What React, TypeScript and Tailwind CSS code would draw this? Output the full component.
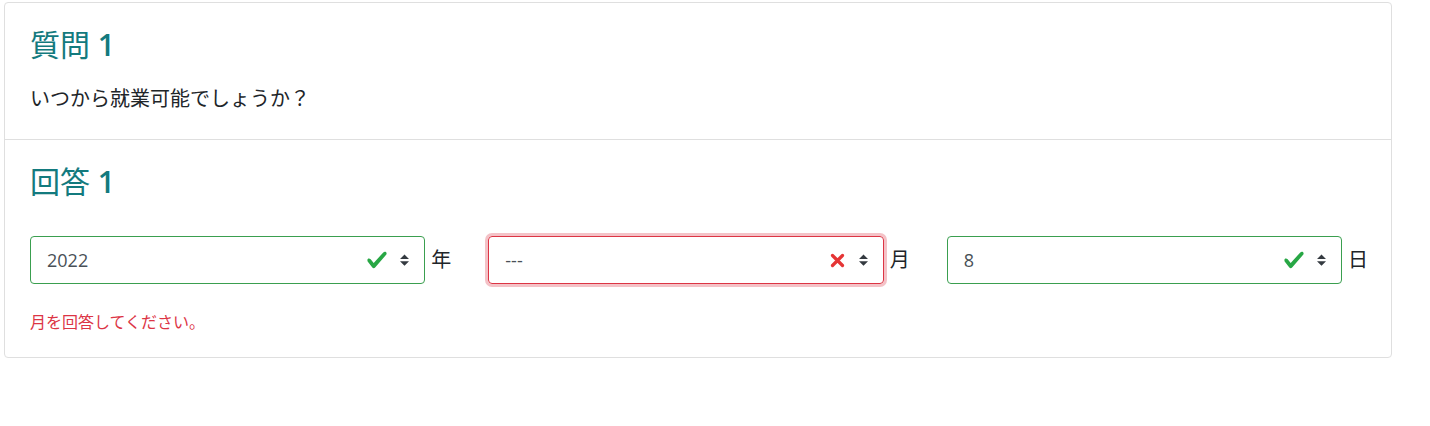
import React from 'react'

type Field = {
  value: string
  unit: string
  valid: boolean
}

const fields: Field[] = [
  { value: '2022', unit: '年', valid: true },
  { value: '---', unit: '月', valid: false },
  { value: '8', unit: '日', valid: true },
]

const CheckIcon = () => (
  <svg width="22" height="22" viewBox="0 0 8 8" className="mr-[12px]">
    <path
      fill="#28a745"
      d="M2.3 6.73L.6 4.53c-.4-1.04.46-1.4 1.1-.8l1.1 1.4 3.4-3.8c.6-.63 1.6-.27 1.2.7l-4 4.6c-.43.5-.8.4-1.1.1z"
    />
  </svg>
)

const CrossIcon = () => (
  <svg width="15" height="15" viewBox="0 0 15 15" className="mr-[14px]">
    <path d="M2.5 2.5l10 10M12.5 2.5l-10 10" stroke="#e53535" strokeWidth="3.2" strokeLinecap="round" />
  </svg>
)

const Arrows = () => (
  <svg width="9" height="12" viewBox="0 0 4 5">
    <path fill="#343a40" d="M2 0L0 2h4zm0 5L0 3h4z" />
  </svg>
)

const App = () => {
  return (
    <div
      className="pl-1 pt-[2px] bg-white min-h-[426px] text-[#212529]"
      style={{ fontFamily: '"Open Sans", "Noto Sans CJK JP", sans-serif' }}
    >
      <div className="w-[1388px] border border-[#dfdfdf] rounded-[4px] bg-white">
        <div className="px-[25px] pt-[25px] pb-[25px] border-b border-[#dfdfdf]">
          <h2 className="text-[30px] leading-[34px] text-[#137a7e] mb-[22px]">
            質問 <span className="font-semibold">1</span>
          </h2>
          <p className="text-[20px] leading-[30px]">いつから就業可能でしょうか？</p>
        </div>
        <div className="px-[25px] pt-[25px] pb-[23px]">
          <h2 className="text-[30px] leading-[34px] text-[#137a7e]">
            回答 <span className="font-semibold">1</span>
          </h2>
          <div className="grid grid-cols-3 gap-x-[39px] mt-[37px]">
            {fields.map((f) => (
              <div key={f.unit} className="flex items-center">
                <div
                  className={
                    f.valid
                      ? 'flex-1 h-[48px] flex items-center pl-4 pr-[15px] border border-[#3a9f4f] rounded-[4px]'
                      : 'flex-1 h-[48px] flex items-center pl-4 pr-[15px] border border-[#dc3545] rounded-[4px] shadow-[0_0_0_3px_rgba(220,53,69,0.3)]'
                  }
                >
                  <span className="flex-1 text-[18px] text-[#495057]">{f.value}</span>
                  {f.valid ? <CheckIcon /> : <CrossIcon />}
                  <Arrows />
                </div>
                <span className="w-[24px] pl-[6px] text-[20px]">{f.unit}</span>
              </div>
            ))}
          </div>
          <p className="mt-[26px] text-[16px] leading-[24px] text-[#dc3545]">月を回答してください。</p>
        </div>
      </div>
    </div>
  )
}

export default App
